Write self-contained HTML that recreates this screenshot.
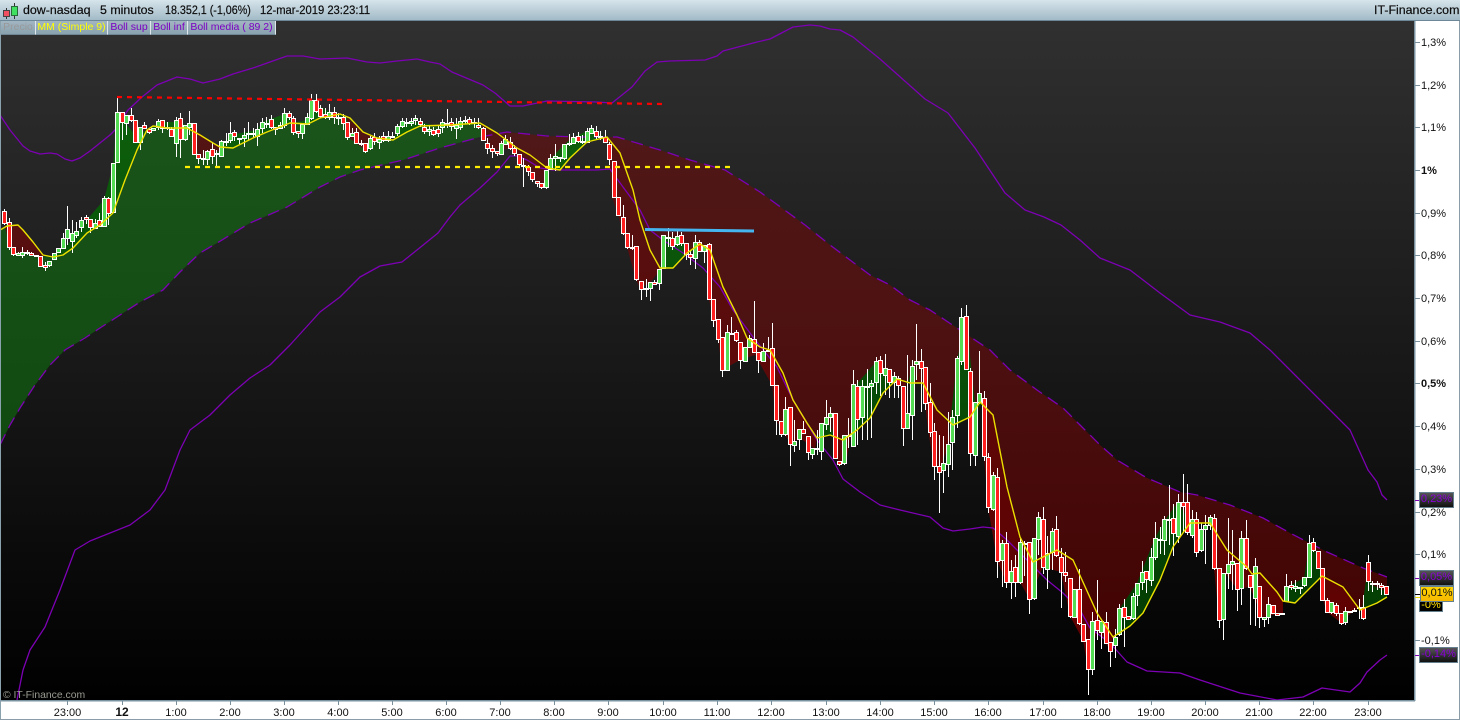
<!DOCTYPE html>
<html lang="es">
<head>
<meta charset="utf-8">
<title>dow-nasdaq</title>
<style>
html,body{margin:0;padding:0;background:#fff}
#w{position:relative;width:1460px;height:720px;overflow:hidden;font-family:"Liberation Sans",Arial,sans-serif;color:#111}
#bar{position:absolute;left:0;top:0;width:1460px;height:20px;background:linear-gradient(#d6e4eb,#a2bac7);border-bottom:1px solid #6c8797}
.t{position:absolute;top:3px;font-size:12.4px;line-height:15px;white-space:pre;color:#0c0c0c;-webkit-text-stroke:.2px #0c0c0c;transform-origin:0 50%}
.lg{position:absolute;top:21px;height:13px;line-height:13px;font-size:10.5px;background:linear-gradient(#a2b6c2,#8aa2af);border-right:1px solid #dfe7ec;border-bottom:1px solid #6f8794;text-align:center;white-space:pre;box-sizing:content-box}
.tag{position:absolute;box-sizing:border-box;border:1.5px solid #64808e;font-size:11px;line-height:13px;text-align:center;color:#8a00d8;background:linear-gradient(#555,#111);white-space:pre}
svg{position:absolute;left:0;top:0}
</style>
</head>
<body>
<div id="w">
<svg width="1460" height="720" viewBox="0 0 1460 720">
<defs>
<linearGradient id="bg" gradientUnits="userSpaceOnUse" x1="0" y1="21" x2="0" y2="705"><stop offset="0" stop-color="#303030"/><stop offset="1" stop-color="#000"/></linearGradient>
<linearGradient id="ag" gradientUnits="userSpaceOnUse" x1="0" y1="120" x2="0" y2="450"><stop offset="0" stop-color="#1a541a"/><stop offset="1" stop-color="#104a10"/></linearGradient>
<linearGradient id="ar" gradientUnits="userSpaceOnUse" x1="0" y1="130" x2="0" y2="650"><stop offset="0" stop-color="#501818"/><stop offset=".4" stop-color="#4d1111"/><stop offset=".75" stop-color="#460808"/><stop offset="1" stop-color="#430202"/></linearGradient>
<linearGradient id="bg2" gradientUnits="userSpaceOnUse" x1="0" y1="120" x2="0" y2="640"><stop offset="0" stop-color="#0c5e0c"/><stop offset="1" stop-color="#033c03"/></linearGradient>
<linearGradient id="br" gradientUnits="userSpaceOnUse" x1="0" y1="130" x2="0" y2="650"><stop offset="0" stop-color="#531414"/><stop offset=".5" stop-color="#5d0808"/><stop offset="1" stop-color="#600000"/></linearGradient>
</defs>
<rect x="0" y="21" width="1414" height="680" fill="url(#bg)"/>
<!-- layer A -->
<polygon fill="url(#ag)" points="0,230 7,226 18,225 23,230 33,242 43,255 53,257 63,255 73,248 87,233 100,225 113,213 125,180 137,150 147,130 153,126 167,128 187,128 200,135 213,143 220,147 233,148 253,138 267,132 290,123 308,124 320,118 340,114 350,118 363,132 377,138 393,140 407,132 420,126 450,125 480,123 497,133 480,137 440,148 403,160 360,170 340,177 320,187 287,207 250,223 217,243 200,253 180,272 163,290 140,302 120,315 100,328 85,338 65,350 50,365 35,385 20,408 10,425 0,445"/>
<polygon fill="url(#ar)" points="497,133 507,132 547,136 580,137 607,137 617,137 660,150 690,160 725,170 760,192 805,225 830,245 850,260 870,275 890,285 910,300 930,310 963,332 990,350 1010,370 1037,390 1063,408 1080,425 1100,445 1117,460 1147,478 1180,492 1197,495 1230,505 1263,518 1290,533 1327,552 1363,568 1387,577 1387,597 1377,603 1360,610 1343,587 1322,576 1295,603 1283,601 1277,592 1260,573 1252,574 1247,567 1227,550 1210,523 1190,523 1173,547 1160,580 1143,613 1130,626 1113,637 1097,613 1073,560 1057,550 1033,562 1020,537 1007,487 993,415 980,402 970,417 953,425 937,410 923,383 910,383 897,379 883,393 870,418 857,430 843,440 830,435 817,438 807,423 793,400 783,373 770,350 760,347 747,338 737,315 723,287 710,250 700,244 687,253 673,268 660,268 650,250 640,220 633,190 620,153 607,137 587,142 570,158 560,170 547,168 530,155 517,148"/>
<!-- layer B green -->
<g fill="url(#bg2)">
<polygon points="50,257 63,248 72,240 85,222 104,200 113,165 117,115 125,122 135,135 147,130 137,150 125,180 113,213 100,225 87,233 73,248 63,255 53,257"/>
<polygon points="147,130 160,122 180,122 195,130 187,128 167,128"/>
<polygon points="222,147 230,135 257,130 262,122 285,114 293,123 307,120 312,102 330,112 345,117 340,114 320,118 308,124 290,123 267,132 253,138 233,148"/>
<polygon points="393,140 400,123 420,122 440,127 460,122 470,120 480,125 480,123 450,125 420,126 407,132"/>
<polygon points="547,170 551,158 565,144 573,137 590,130 605,137 587,142 570,158 560,170"/>
<polygon points="660,268 664,236 680,238 690,254 697,245 687,253 673,268"/>
<polygon points="817,438 826,418 835,436 830,435"/>
<polygon points="851,436 855,386 876,362 897,379 883,393 870,418 857,430"/>
<polygon points="908,383 912,366 918,383"/>
<polygon points="950,424 957,360 966,318 975,402 982,404 970,417 957,425"/>
<polygon points="1115,637 1120,608 1137,583 1155,538 1165,520 1178,502 1190,523 1173,547 1160,580 1143,613 1130,626"/>
<polygon points="1284,601 1287,587 1304,578 1309,545 1318,555 1322,576 1295,603"/>
<polygon points="1362,609 1368,565 1372,585 1387,592 1387,597 1377,603"/>
</g>
<!-- layer B red -->
<g fill="url(#br)">
<polygon points="5,227 18,225 33,242 45,256 40,258 28,254 14,252 9,243"/>
<polygon points="195,130 213,143 220,147 222,150 214,153 205,158 198,157"/>
<polygon points="347,117 363,132 377,138 390,140 386,139 374,142 365,150 356,143 348,137"/>
<polygon points="481,124 497,133 517,148 530,155 547,168 547,185 537,183 528,171 519,160 510,148 500,150 487,147"/>
<polygon points="607,137 620,153 633,190 640,220 650,250 660,267 660,270 650,283 640,288 636,280 627,247 618,215 612,197 609,160"/>
<polygon points="700,244 710,250 723,287 737,315 747,338 760,347 770,350 783,373 793,400 807,423 817,438 815,449 800,438 790,443 776,420 772,385 755,355 740,360 722,370 718,338 709,300 706,250"/>
<polygon points="835,436 843,440 851,436 846,463 838,462"/>
<polygon points="900,380 906,383 908,420 903,428 900,386"/>
<polygon points="914,383 923,383 937,410 948,422 950,440 940,470 934,466 928,430 925,403 921,368"/>
<polygon points="985,408 993,415 1007,487 1020,537 1033,562 1043,555 1057,550 1073,560 1097,613 1113,637 1110,650 1105,642 1097,630 1088,669 1083,640 1070,616 1061,572 1043,567 1029,598 1020,582 1006,582 997,560 988,507 984,456"/>
<polygon points="1192,523 1196,552 1201,530"/>
<polygon points="1212,523 1227,550 1247,567 1252,574 1260,573 1277,592 1283,601 1283,613 1262,617 1250,587 1237,589 1225,573 1219,620 1214,568"/>
<polygon points="1322,576 1343,587 1360,610 1358,608 1340,622 1327,612 1323,600"/>
</g>
<!-- Bollinger -->
<g fill="none" stroke="#7d00b4" stroke-width="1.3" stroke-linejoin="round">
<polyline points="0,115 10,130 23,146 30,151 40,154 50,153 57,154 65,159 72,161 80,158 90,151 100,143 110,135 115,130 128,110 142,97 157,85 177,77 190,79 203,83 220,79 233,74 253,68 270,62 287,56 303,56 320,59 347,58 367,62 380,63 397,61 417,59 430,62 440,64 452,72 483,85 495,93 510,106 523,106 547,101 597,102 612,103 632,87 645,71 657,62 670,61 705,60 717,56 723,51 757,42 770,39 793,27 810,25 820,26 830,29 840,30 853,37 880,59 925,99 948,113 975,148 1005,193 1025,210 1044,217 1061,225 1080,240 1100,258 1130,270 1160,293 1190,315 1220,322 1250,333 1270,350 1300,380 1320,400 1350,430 1368,470 1377,482 1382,495 1387,500"/>
<polyline points="17,700 23,670 30,650 45,627 60,590 75,550 90,541 130,525 150,510 165,490 180,450 190,430 210,415 230,395 250,378 270,365 290,345 320,312 340,297 360,277 380,266 402,262 417,250 438,233 450,217 460,205 480,188 497,172 510,156 517,156 527,160 540,168 553,170 597,170 610,169 623,187 640,210 650,230 663,240 683,253 703,268 720,287 733,310 753,337 777,367 793,400 817,440 833,460 843,479 860,492 880,505 900,510 930,517 943,528 953,531 970,529 983,527 993,528 1007,540 1027,560 1047,580 1063,593 1080,610 1090,628 1110,643 1127,662 1147,671 1180,673 1200,680 1240,693 1277,700 1303,697 1322,688 1350,692 1360,683 1367,672 1380,660 1387,655"/>
<polyline stroke-dasharray="12 7" points="0,445 10,425 20,408 35,385 50,365 65,350 85,338 100,328 120,315 140,302 163,290 180,272 200,253 217,243 250,223 287,207 320,187 340,177 360,170 403,160 440,148 480,137 507,132 547,136 580,137 617,137 660,150 690,160 725,170 760,192 805,225 830,245 850,260 870,275 890,285 910,300 930,310 963,332 990,350 1010,370 1037,390 1063,408 1080,425 1100,445 1117,460 1147,478 1180,492 1197,495 1230,505 1263,518 1290,533 1327,552 1363,568 1387,577"/>
</g>
<!-- wicks -->
<path fill="none" stroke="#fff" stroke-width="1" shape-rendering="crispEdges" d="M4.5 209V225M9.5 218V250M13.5 247V256M18.5 252V256M22.5 247V258M27.5 250V255M31.5 252V256M45.5 262V271M49.5 261V267M63.5 233V249M67.5 206V245M72.5 220V253M76.5 222V238M81.5 217V232M86.5 215V224M90.5 219V233M95.5 219V229M99.5 213V227M104.5 196V227M108.5 197V225M117.5 98V163M122.5 112V140M126.5 115V135M131.5 108V122M140.5 127V150M144.5 122V128M149.5 129V134M158.5 119V130M162.5 120V133M167.5 122V130M171.5 127V137M176.5 117V157M180.5 113V158M185.5 125V141M189.5 111V135M198.5 154V164M203.5 150V165M207.5 150V165M212.5 142V164M216.5 150V166M221.5 140V156M226.5 133V146M230.5 122V143M234.5 130V141M239.5 138V145M244.5 128V147M248.5 122V140M253.5 128V138M257.5 123V146M262.5 118V133M266.5 117V128M271.5 115V129M275.5 127V135M280.5 122V128M284.5 108V128M289.5 111V120M293.5 116V135M298.5 131V138M302.5 124V139M307.5 113V124M311.5 94V120M316.5 94V113M320.5 105V118M325.5 108V119M329.5 104V120M334.5 107V124M338.5 113V125M343.5 114V130M347.5 122V140M352.5 128V136M356.5 128V143M361.5 140V146M365.5 143V153M370.5 136V150M374.5 133V145M379.5 136V149M383.5 132V142M388.5 131V142M392.5 132V138M397.5 124V136M402.5 118V128M406.5 118V127M411.5 118V126M415.5 115V125M420.5 118V127M424.5 124V134M429.5 126V136M433.5 127V136M438.5 125V137M442.5 119V133M447.5 109V128M451.5 118V131M456.5 118V139M460.5 117V130M465.5 116V124M469.5 117V125M474.5 118V128M478.5 118V129M483.5 127V140M487.5 138V154M492.5 145V158M497.5 151V156M501.5 141V154M505.5 135V144M510.5 137V150M514.5 145V156M519.5 154V167M523.5 158V187M528.5 165V176M532.5 172V182M537.5 181V187M541.5 183V189M546.5 170V189M550.5 154V169M555.5 144V171M560.5 157V162M564.5 144V160M569.5 134V146M573.5 133V143M578.5 132V143M582.5 135V144M587.5 128V143M591.5 125V133M596.5 126V140M600.5 131V140M605.5 130V143M609.5 142V165M614.5 161V198M618.5 197V216M623.5 205V235M627.5 233V249M632.5 235V250M636.5 246V281M641.5 281V300M646.5 279V297M650.5 282V301M654.5 280V284M659.5 269V290M668.5 228V247M672.5 232V250M677.5 231V246M681.5 232V246M686.5 243V260M690.5 250V265M695.5 235V269M699.5 240V251M704.5 245V263M709.5 243V299M713.5 299V327M718.5 319V343M722.5 337V377M727.5 325V370M731.5 317V335M736.5 330V342M740.5 342V369M745.5 347V362M749.5 335V347M754.5 301V353M758.5 352V373M763.5 343V362M768.5 337V352M772.5 323V386M776.5 385V435M781.5 421V437M785.5 397V436M790.5 407V466M794.5 420V452M799.5 429V450M803.5 421V434M808.5 436V460M812.5 448V459M817.5 430V455M821.5 423V460M826.5 400V430M830.5 407V432M835.5 413V459M839.5 461V466M844.5 435V465M848.5 418V448M853.5 370V447M857.5 380V445M862.5 380V440M867.5 369V440M871.5 380V438M876.5 357V394M880.5 356V396M885.5 354V395M889.5 369V398M894.5 372V398M898.5 376V398M903.5 386V446M907.5 355V429M912.5 360V440M916.5 324V380M921.5 349V412M925.5 367V410M930.5 383V437M934.5 423V480M939.5 435V513M943.5 436V493M948.5 412V477M952.5 410V470M957.5 356V428M961.5 308V365M966.5 305V370M970.5 368V466M975.5 402V466M979.5 351V404M984.5 391V461M988.5 453V513M993.5 472V511M997.5 468V578M1002.5 540V587M1006.5 532V588M1011.5 560V599M1015.5 555V597M1020.5 538V584M1024.5 541V576M1029.5 542V614M1034.5 538V600M1038.5 512V555M1043.5 507V574M1047.5 536V589M1052.5 528V570M1056.5 516V557M1061.5 548V608M1065.5 552V582M1070.5 578V618M1074.5 589V618M1079.5 569V625M1083.5 624V642M1088.5 639V695M1092.5 612V675M1097.5 580V640M1101.5 621V649M1106.5 612V644M1110.5 642V667M1115.5 629V658M1119.5 604V636M1124.5 599V647M1133.5 593V620M1137.5 583V606M1142.5 561V590M1146.5 571V593M1151.5 548V586M1155.5 522V560M1160.5 527V554M1164.5 516V555M1169.5 485V545M1173.5 504V556M1178.5 494V543M1183.5 474V533M1187.5 484V535M1192.5 510V538M1196.5 512V557M1201.5 523V552M1205.5 515V564M1210.5 515V530M1214.5 514V570M1219.5 568V628M1223.5 573V640M1228.5 518V589M1232.5 530V590M1237.5 563V611M1241.5 531V605M1246.5 520V570M1250.5 575V625M1255.5 558V626M1259.5 586V628M1264.5 617V627M1268.5 597V624M1286.5 574V602M1291.5 581V590M1295.5 580V592M1300.5 587V594M1304.5 577V587M1309.5 535V578M1313.5 538V552M1327.5 598V613M1331.5 602V614M1336.5 603V616M1341.5 613V625M1345.5 607V625M1354.5 608V612M1359.5 599V619M1363.5 595V620M1368.5 555V591M1372.5 581V592M1377.5 581V590M1381.5 583V595"/>
<!-- green bodies -->
<path fill="#55dc55" stroke="#fff" stroke-width="1" shape-rendering="crispEdges" d="M16.5 253.5h4v2h-4zM20.5 252.5h4v3h-4zM25.5 252.5h4v1h-4zM47.5 261.5h4v4h-4zM52.5 253.5h4v6h-4zM56.5 248.5h4v4h-4zM61.5 238.5h4v10h-4zM65.5 229.5h4v9h-4zM70.5 233.5h4v8h-4zM74.5 231.5h4v4h-4zM79.5 220.5h4v7h-4zM93.5 223.5h4v5h-4zM102.5 198.5h4v28h-4zM111.5 163.5h4v49h-4zM115.5 112.5h4v50h-4zM124.5 115.5h4v8h-4zM138.5 127.5h4v15h-4zM151.5 128.5h4v2h-4zM156.5 121.5h4v6h-4zM174.5 120.5h4v23h-4zM183.5 125.5h4v14h-4zM187.5 123.5h4v4h-4zM205.5 151.5h4v8h-4zM219.5 141.5h4v15h-4zM228.5 133.5h4v7h-4zM242.5 135.5h4v3h-4zM255.5 129.5h4v7h-4zM260.5 122.5h4v6h-4zM278.5 125.5h4v3h-4zM282.5 113.5h4v12h-4zM300.5 124.5h4v9h-4zM305.5 117.5h4v7h-4zM309.5 100.5h4v18h-4zM327.5 112.5h4v5h-4zM350.5 133.5h4v3h-4zM368.5 138.5h4v10h-4zM377.5 139.5h4v3h-4zM386.5 136.5h4v4h-4zM395.5 126.5h4v7h-4zM400.5 121.5h4v5h-4zM409.5 121.5h4v2h-4zM413.5 118.5h4v2h-4zM427.5 129.5h4v2h-4zM440.5 122.5h4v5h-4zM454.5 125.5h4v3h-4zM458.5 121.5h4v6h-4zM499.5 143.5h4v11h-4zM503.5 139.5h4v5h-4zM544.5 170.5h4v17h-4zM548.5 158.5h4v11h-4zM553.5 156.5h4v2h-4zM562.5 144.5h4v14h-4zM571.5 137.5h4v6h-4zM585.5 131.5h4v11h-4zM589.5 128.5h4v5h-4zM648.5 282.5h4v6h-4zM657.5 269.5h4v14h-4zM661.5 235.5h4v33h-4zM675.5 236.5h4v8h-4zM693.5 242.5h4v16h-4zM702.5 245.5h4v6h-4zM725.5 332.5h4v38h-4zM743.5 347.5h4v14h-4zM747.5 338.5h4v9h-4zM761.5 351.5h4v10h-4zM783.5 409.5h4v25h-4zM792.5 441.5h4v4h-4zM797.5 429.5h4v10h-4zM810.5 448.5h4v6h-4zM819.5 423.5h4v28h-4zM824.5 417.5h4v7h-4zM828.5 413.5h4v4h-4zM842.5 435.5h4v28h-4zM851.5 384.5h4v62h-4zM860.5 386.5h4v31h-4zM869.5 383.5h4v3h-4zM874.5 361.5h4v21h-4zM883.5 368.5h4v7h-4zM892.5 376.5h4v6h-4zM905.5 413.5h4v15h-4zM910.5 366.5h4v49h-4zM914.5 361.5h4v3h-4zM941.5 463.5h4v7h-4zM946.5 444.5h4v20h-4zM950.5 417.5h4v25h-4zM955.5 358.5h4v57h-4zM959.5 317.5h4v44h-4zM973.5 402.5h4v53h-4zM977.5 393.5h4v9h-4zM991.5 475.5h4v34h-4zM1000.5 543.5h4v17h-4zM1009.5 571.5h4v11h-4zM1018.5 542.5h4v40h-4zM1032.5 538.5h4v60h-4zM1036.5 517.5h4v22h-4zM1045.5 553.5h4v16h-4zM1050.5 531.5h4v21h-4zM1072.5 589.5h4v28h-4zM1090.5 621.5h4v48h-4zM1099.5 621.5h4v11h-4zM1113.5 637.5h4v8h-4zM1117.5 608.5h4v26h-4zM1131.5 596.5h4v22h-4zM1135.5 583.5h4v12h-4zM1140.5 572.5h4v10h-4zM1149.5 557.5h4v23h-4zM1153.5 538.5h4v19h-4zM1162.5 519.5h4v21h-4zM1176.5 502.5h4v34h-4zM1190.5 519.5h4v16h-4zM1199.5 529.5h4v21h-4zM1203.5 525.5h4v4h-4zM1208.5 517.5h4v8h-4zM1221.5 573.5h4v46h-4zM1226.5 564.5h4v9h-4zM1230.5 561.5h4v3h-4zM1239.5 538.5h4v50h-4zM1253.5 566.5h4v32h-4zM1262.5 617.5h4v2h-4zM1266.5 604.5h4v13h-4zM1284.5 586.5h4v15h-4zM1293.5 586.5h4v2h-4zM1302.5 577.5h4v8h-4zM1307.5 543.5h4v34h-4zM1329.5 602.5h4v10h-4zM1343.5 611.5h4v11h-4z"/>
<!-- red bodies -->
<path fill="#ff1f1f" stroke="#fff" stroke-width="1" shape-rendering="crispEdges" d="M2.5 211.5h4v12h-4zM7.5 222.5h4v25h-4zM11.5 247.5h4v7h-4zM29.5 253.5h4v2h-4zM38.5 256.5h4v10h-4zM43.5 265.5h4v2h-4zM84.5 217.5h4v2h-4zM88.5 219.5h4v8h-4zM97.5 220.5h4v6h-4zM106.5 198.5h4v15h-4zM120.5 112.5h4v10h-4zM129.5 115.5h4v5h-4zM133.5 120.5h4v22h-4zM142.5 125.5h4v3h-4zM147.5 129.5h4v3h-4zM160.5 120.5h4v8h-4zM169.5 129.5h4v7h-4zM178.5 118.5h4v21h-4zM192.5 123.5h4v31h-4zM196.5 154.5h4v4h-4zM210.5 149.5h4v7h-4zM232.5 132.5h4v4h-4zM237.5 138.5h4v1h-4zM269.5 119.5h4v8h-4zM273.5 127.5h4v2h-4zM287.5 113.5h4v4h-4zM291.5 118.5h4v14h-4zM296.5 131.5h4v2h-4zM314.5 100.5h4v11h-4zM318.5 108.5h4v8h-4zM323.5 114.5h4v3h-4zM332.5 112.5h4v5h-4zM341.5 117.5h4v6h-4zM345.5 122.5h4v15h-4zM354.5 132.5h4v11h-4zM359.5 143.5h4v1h-4zM363.5 143.5h4v8h-4zM372.5 137.5h4v4h-4zM381.5 136.5h4v4h-4zM418.5 121.5h4v3h-4zM422.5 127.5h4v4h-4zM431.5 130.5h4v4h-4zM436.5 129.5h4v4h-4zM449.5 122.5h4v4h-4zM467.5 119.5h4v4h-4zM476.5 125.5h4v2h-4zM481.5 128.5h4v12h-4zM485.5 143.5h4v5h-4zM490.5 148.5h4v3h-4zM495.5 151.5h4v2h-4zM508.5 142.5h4v6h-4zM512.5 148.5h4v5h-4zM517.5 154.5h4v10h-4zM526.5 167.5h4v4h-4zM530.5 172.5h4v7h-4zM535.5 181.5h4v2h-4zM539.5 183.5h4v4h-4zM558.5 157.5h4v1h-4zM576.5 136.5h4v5h-4zM594.5 131.5h4v5h-4zM603.5 137.5h4v5h-4zM607.5 144.5h4v15h-4zM612.5 161.5h4v36h-4zM616.5 197.5h4v18h-4zM621.5 217.5h4v16h-4zM625.5 233.5h4v14h-4zM634.5 246.5h4v33h-4zM639.5 281.5h4v8h-4zM652.5 282.5h4v2h-4zM670.5 238.5h4v8h-4zM679.5 235.5h4v8h-4zM684.5 243.5h4v11h-4zM688.5 254.5h4v3h-4zM697.5 242.5h4v9h-4zM707.5 244.5h4v55h-4zM711.5 299.5h4v21h-4zM716.5 319.5h4v20h-4zM720.5 337.5h4v33h-4zM734.5 332.5h4v8h-4zM738.5 342.5h4v18h-4zM752.5 339.5h4v13h-4zM756.5 352.5h4v8h-4zM770.5 348.5h4v37h-4zM774.5 385.5h4v35h-4zM779.5 421.5h4v13h-4zM788.5 407.5h4v37h-4zM801.5 429.5h4v4h-4zM806.5 436.5h4v16h-4zM815.5 448.5h4v1h-4zM833.5 413.5h4v45h-4zM837.5 461.5h4v3h-4zM855.5 386.5h4v33h-4zM878.5 360.5h4v13h-4zM887.5 369.5h4v13h-4zM896.5 378.5h4v7h-4zM901.5 386.5h4v42h-4zM919.5 361.5h4v7h-4zM923.5 367.5h4v36h-4zM928.5 402.5h4v30h-4zM932.5 431.5h4v35h-4zM937.5 466.5h4v6h-4zM964.5 316.5h4v53h-4zM968.5 371.5h4v82h-4zM982.5 398.5h4v58h-4zM986.5 457.5h4v50h-4zM995.5 477.5h4v84h-4zM1004.5 543.5h4v39h-4zM1013.5 567.5h4v15h-4zM1027.5 542.5h4v57h-4zM1041.5 519.5h4v48h-4zM1054.5 529.5h4v26h-4zM1059.5 557.5h4v15h-4zM1063.5 572.5h4v3h-4zM1068.5 578.5h4v38h-4zM1077.5 589.5h4v34h-4zM1081.5 624.5h4v17h-4zM1086.5 639.5h4v30h-4zM1095.5 620.5h4v10h-4zM1104.5 622.5h4v21h-4zM1108.5 642.5h4v9h-4zM1122.5 607.5h4v10h-4zM1126.5 616.5h4v3h-4zM1144.5 571.5h4v8h-4zM1171.5 518.5h4v15h-4zM1181.5 502.5h4v4h-4zM1185.5 502.5h4v30h-4zM1194.5 519.5h4v33h-4zM1212.5 518.5h4v50h-4zM1217.5 568.5h4v52h-4zM1235.5 563.5h4v26h-4zM1244.5 538.5h4v30h-4zM1248.5 575.5h4v12h-4zM1257.5 586.5h4v31h-4zM1271.5 605.5h4v8h-4zM1275.5 613.5h4v2h-4zM1289.5 585.5h4v2h-4zM1311.5 542.5h4v8h-4zM1316.5 551.5h4v17h-4zM1320.5 568.5h4v32h-4zM1325.5 600.5h4v12h-4zM1334.5 605.5h4v8h-4zM1339.5 613.5h4v10h-4zM1361.5 607.5h4v11h-4zM1366.5 562.5h4v19h-4zM1370.5 583.5h4v1h-4zM1375.5 583.5h4v1h-4zM1379.5 585.5h4v2h-4zM1384.5 586.5h4v8h-4z"/>
<!-- doji -->
<path fill="#fff" stroke="#fff" stroke-width="1" shape-rendering="crispEdges" d="M34.5 255.5h4v1h-4zM165.5 127.5h4v1h-4zM201.5 158.5h4v1h-4zM214.5 153.5h4v1h-4zM224.5 141.5h4v1h-4zM246.5 133.5h4v1h-4zM251.5 133.5h4v1h-4zM264.5 123.5h4v1h-4zM336.5 117.5h4v1h-4zM390.5 136.5h4v1h-4zM404.5 122.5h4v1h-4zM445.5 123.5h4v1h-4zM463.5 120.5h4v1h-4zM472.5 122.5h4v1h-4zM521.5 165.5h4v1h-4zM567.5 143.5h4v1h-4zM580.5 141.5h4v1h-4zM598.5 136.5h4v1h-4zM630.5 247.5h4v1h-4zM644.5 288.5h4v1h-4zM666.5 237.5h4v1h-4zM729.5 333.5h4v1h-4zM766.5 350.5h4v1h-4zM846.5 435.5h4v1h-4zM865.5 386.5h4v1h-4zM1022.5 543.5h4v1h-4zM1158.5 539.5h4v1h-4zM1167.5 519.5h4v1h-4zM1280.5 613.5h4v1h-4zM1298.5 587.5h4v1h-4zM1348.5 611.5h4v1h-4zM1352.5 610.5h4v1h-4zM1357.5 607.5h4v1h-4z"/>
<!-- MM -->
<polyline fill="none" stroke="#ece000" stroke-width="1.4" stroke-linejoin="round" points="0,230 7,226 18,225 23,230 33,242 43,255 53,257 63,255 73,248 87,233 100,225 113,213 125,180 137,150 147,130 153,126 167,128 187,128 200,135 213,143 220,147 233,148 253,138 267,132 290,123 308,124 320,118 340,114 350,118 363,132 377,138 393,140 407,132 420,126 450,125 480,123 497,133 517,148 530,155 547,168 560,170 570,158 587,142 607,137 620,153 633,190 640,220 650,250 660,268 673,268 687,253 700,244 710,250 723,287 737,315 747,338 760,347 770,350 783,373 793,400 807,423 817,438 830,435 843,440 857,430 870,418 883,393 897,379 910,383 923,383 937,410 953,425 970,417 980,402 993,415 1007,487 1020,537 1033,562 1057,550 1073,560 1097,613 1113,637 1130,626 1143,613 1160,580 1173,547 1190,523 1210,523 1227,550 1247,567 1252,574 1260,573 1277,592 1283,601 1295,603 1322,576 1343,587 1360,610 1377,603 1387,597"/>
<!-- drawn lines -->
<line x1="117" y1="97" x2="663" y2="104" stroke="#ff0000" stroke-width="2.2" stroke-dasharray="5 5"/>
<line x1="185" y1="167" x2="731" y2="167" stroke="#ffee00" stroke-width="2.2" stroke-dasharray="5 5"/>
<line x1="645" y1="229.5" x2="754" y2="231" stroke="#45b5f0" stroke-width="3"/>
<text x="3" y="698" font-family="'Liberation Sans',Arial,sans-serif" font-size="10.4" fill="#9a9a92">© IT-Finance.com</text>
<!-- frame -->
<rect x="1415" y="21" width="45" height="699" fill="#fff"/>
<rect x="0" y="701" width="1460" height="19" fill="#fff"/>
<rect x="1414" y="21" width="1.5" height="680" fill="#7a93a1"/>
<rect x="0" y="700" width="1415" height="1.5" fill="#7a93a1"/>
<rect x="0" y="21" width="1" height="699" fill="#8aa1ae"/>
<rect x="0" y="719" width="1460" height="1" fill="#8a9ca7"/>
<rect x="1459" y="21" width="1" height="699" fill="#8a9ca7"/>
<!-- y ticks -->
<path stroke="#7a8f9c" stroke-width="1" shape-rendering="crispEdges" d="M1415 42.5h5M1415 85.5h5M1415 127.5h5M1415 170.5h5M1415 213.5h5M1415 255.5h5M1415 298.5h5M1415 341.5h5M1415 383.5h5M1415 426.5h5M1415 469.5h5M1415 512.5h5M1415 554.5h5M1415 640.5h5"/>
<path stroke="#7d00b4" stroke-width="1" shape-rendering="crispEdges" d="M1415 500.5h5M1415 578.5h5M1415 655.5h5"/>
<path stroke="#000" stroke-width="1" shape-rendering="crispEdges" d="M1415 594.5h5"/>
<path stroke="#e8d800" stroke-width="1" shape-rendering="crispEdges" d="M1415 597.5h5"/>
<g font-family="'Liberation Sans',Arial,sans-serif" font-size="11" fill="#111">
<text x="1421" y="46">1,3%</text><text x="1421" y="89">1,2%</text><text x="1421" y="131">1,1%</text><text x="1421" y="174" font-weight="bold">1%</text><text x="1421" y="217">0,9%</text><text x="1421" y="259">0,8%</text><text x="1421" y="302">0,7%</text><text x="1421" y="345">0,6%</text><text x="1421" y="387" font-weight="bold">0,5%</text><text x="1421" y="430">0,4%</text><text x="1421" y="473">0,3%</text><text x="1421" y="516">0,2%</text><text x="1421" y="558">0,1%</text><text x="1421" y="644">-0,1%</text>
</g>
<!-- x ticks -->
<path stroke="#7a8f9c" stroke-width="1" shape-rendering="crispEdges" d="M67.5 701v4M122.5 701v4M176.5 701v4M230.5 701v4M284.5 701v4M338.5 701v4M392.5 701v4M446.5 701v4M500.5 701v4M554.5 701v4M608.5 701v4M663.5 701v4M717.5 701v4M771.5 701v4M826.5 701v4M880.5 701v4M934.5 701v4M988.5 701v4M1043.5 701v4M1097.5 701v4M1151.5 701v4M1205.5 701v4M1259.5 701v4M1313.5 701v4M1368.5 701v4"/>
<g font-family="'Liberation Sans',Arial,sans-serif" font-size="11" fill="#111" text-anchor="middle">
<text x="67.5" y="716">23:00</text><text x="122" y="716" font-weight="bold" font-size="12">12</text><text x="176" y="716">1:00</text><text x="230" y="716">2:00</text><text x="284" y="716">3:00</text><text x="338" y="716">4:00</text><text x="392" y="716">5:00</text><text x="446" y="716">6:00</text><text x="500" y="716">7:00</text><text x="554" y="716">8:00</text><text x="608" y="716">9:00</text><text x="663" y="716">10:00</text><text x="717" y="716">11:00</text><text x="771" y="716">12:00</text><text x="826" y="716">13:00</text><text x="880" y="716">14:00</text><text x="934" y="716">15:00</text><text x="988" y="716">16:00</text><text x="1043" y="716">17:00</text><text x="1097" y="716">18:00</text><text x="1151" y="716">19:00</text><text x="1205" y="716">20:00</text><text x="1259" y="716">21:00</text><text x="1313" y="716">22:00</text><text x="1368" y="716">23:00</text>
</g>
</svg>
<div id="bar"></div>
<svg width="20" height="20" viewBox="0 0 20 20" style="left:0;top:0">
<path stroke="#333" stroke-width="1" d="M6.5 8V19M14.5 3V19" shape-rendering="crispEdges"/>
<rect x="3.5" y="10.5" width="6" height="6" fill="#f05060" stroke="#444" shape-rendering="crispEdges"/>
<rect x="11.5" y="6.5" width="6" height="9" fill="#40e060" stroke="#2a6a3a" shape-rendering="crispEdges"/>
</svg>
<div class="t" style="left:23px">dow-nasdaq</div>
<div class="t" style="left:100px">5 minutos</div>
<div class="t" style="left:165px;transform:scaleX(.865)">18.352,1 (-1,06%)</div>
<div class="t" style="left:260px;transform:scaleX(.905)">12-mar-2019 23:23:11</div>
<div class="t" style="left:1374px">IT-Finance.com</div>
<div class="lg" style="left:1px;width:34px;color:#999">Precio</div>
<div class="lg" style="left:36px;width:71px;color:#ffff00">MM (Simple 9)</div>
<div class="lg" style="left:108px;width:42px;color:#7d00c4">Boll sup</div>
<div class="lg" style="left:151px;width:36px;color:#7d00c4">Boll inf</div>
<div class="lg" style="left:188px;width:87px;color:#7d00c4">Boll media ( 89 2)</div>
<div class="tag" style="left:1419px;top:492px;width:35px;height:16px">0,23%</div>
<div class="tag" style="left:1419px;top:570px;width:35px;height:16px">0,05%</div>
<div class="tag" style="left:1419px;top:600px;width:24px;height:12px;background:#000;color:#ffe000;line-height:9px;border-width:1px">-0%</div>
<div class="tag" style="left:1420px;top:586px;width:34px;height:16px;background:linear-gradient(#ffd400,#f5b800);color:#111">0,01%</div>
<div class="tag" style="left:1419px;top:647px;width:39px;height:16px">-0,14%</div>
</div>
</body>
</html>
